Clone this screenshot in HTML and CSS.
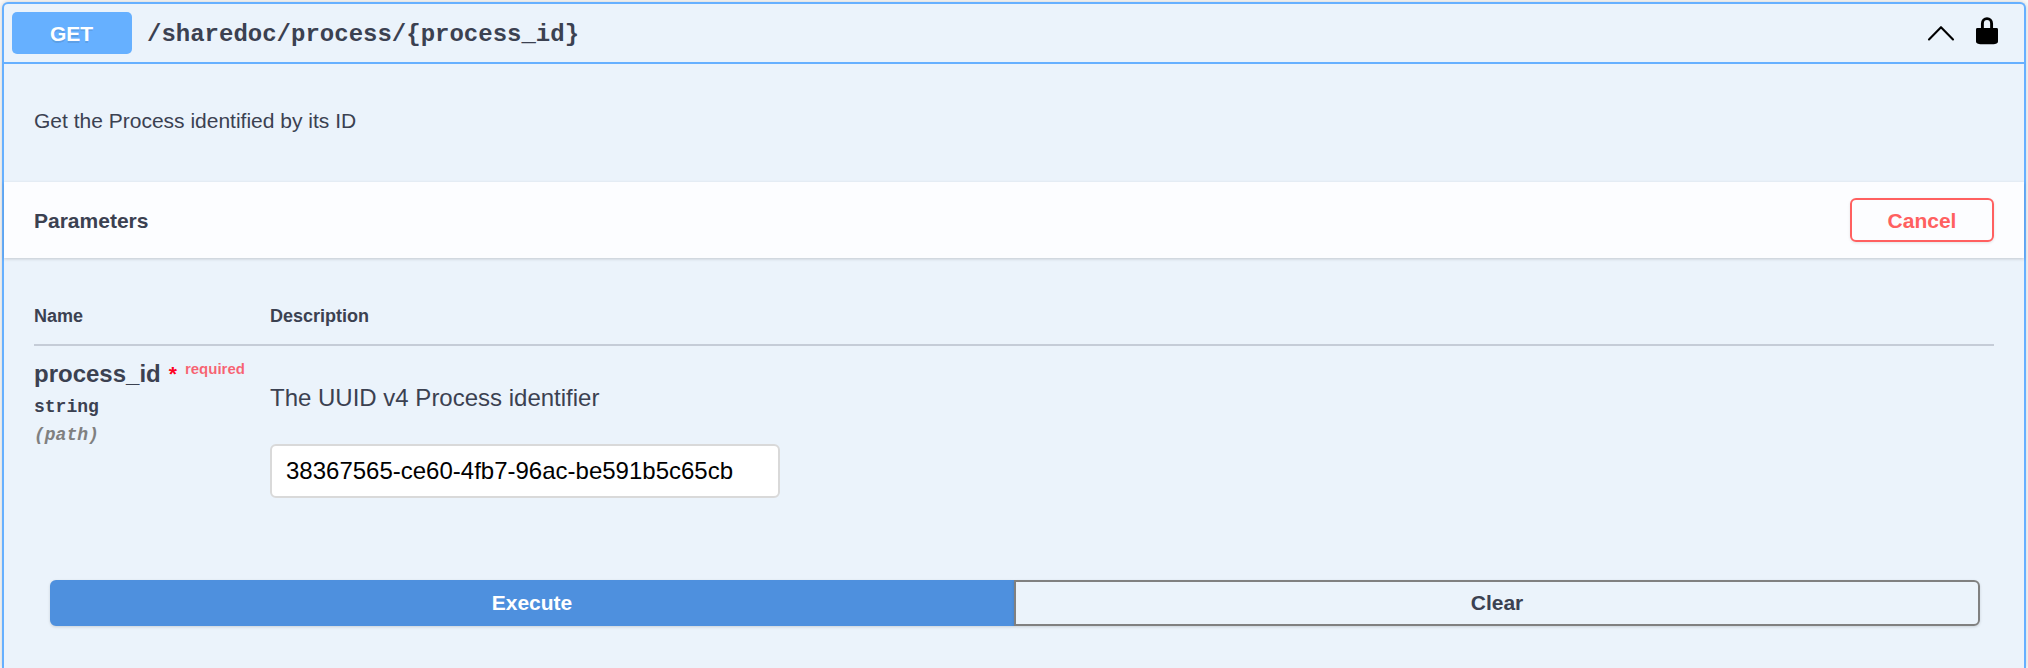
FILE: index.html
```html
<!DOCTYPE html>
<html lang="en">
<head>
<meta charset="utf-8">
<title>API operation</title>
<link rel="stylesheet" href="styles.css">
</head>
<body>
<section class="opblock">
  <header class="summary">
    <span class="method">GET</span>
    <span class="path">/sharedoc/process/{process_id}</span>
    <svg class="chevron" width="28" height="18" viewBox="0 0 28 18"><path d="M2 15.5 14 3.2 26 15.5" fill="none" stroke="#000" stroke-width="2.1" stroke-linecap="round" stroke-linejoin="round"/></svg>
    <svg class="lock" width="22" height="28" viewBox="0 0 22 28"><path d="M6.400 12V6.500C6.400 3.600 8.400 1.600 11 1.600s4.600 2 4.600 4.900V12" fill="none" stroke="#000" stroke-width="2.900"/><path d="M1.400 11h19.200q1.400 0 1.400 1.400v12.200q0 1.300-1.400 1.900-1.600.7-3 .7H4.400q-1.400 0-3-.7Q0 25.900 0 24.600V12.400Q0 11 1.400 11z"/></svg>
  </header>
  <p class="description">Get the Process identified by its ID</p>
  <div class="section-header">
    <h4 class="section-title">Parameters</h4>
    <button class="btn cancel">Cancel</button>
  </div>
  <div class="parameters">
    <div class="row head"><span>Name</span><span>Description</span></div>
    <div class="row">
      <div class="param">
        <div class="param-name">process_id<span class="star">*</span><span class="required">required</span></div>
        <div class="param-type">string</div>
        <div class="param-in">(path)</div>
      </div>
      <div class="param-info">
        <p class="param-text">The UUID v4 Process identifier</p>
        <input class="param-input" type="text" value="38367565-ce60-4fb7-96ac-be591b5c65cb">
      </div>
    </div>
  </div>
  <div class="actions">
    <button class="btn execute">Execute</button>
    <button class="btn clear">Clear</button>
  </div>
</section>
</body>
</html>
```
FILE: styles.css
```css
* { box-sizing: border-box; }
body {
  margin: 0;
  padding: 2px 2px 0;
  height: 668px;
  background: #fafafa;
  color: #3b4151;
  font-family: "Liberation Sans", Arial, sans-serif;
}
p, h4 { margin: 0; }
.opblock {
  height: 666px;
  border: 2px solid #66b0ff;
  border-bottom: 0;
  border-radius: 6px 6px 0 0;
  background: #ebf3fb;
  box-shadow: 0 0 5px rgba(0, 0, 0, .19);
}
.summary {
  display: flex;
  align-items: center;
  height: 60px;
  padding: 0 26px 0 8px;
  border-bottom: 2px solid #66b0ff;
}
.method {
  width: 120px;
  height: 42px;
  padding-right: 1px;
  border-radius: 5px;
  background: #66b0ff;
  color: #fff;
  font-size: 21px;
  font-weight: 700;
  line-height: 44px;
  text-align: center;
  text-shadow: 0 2px 0 rgba(0, 0, 0, .1);
}
.path {
  flex: 1;
  margin-left: 15px;
  padding-top: 4px;
  font: 700 24px/28px "Liberation Mono", "Courier New", monospace;
}
.chevron { margin-right: 21px; }
.lock { margin-bottom: 4px; }
.description {
  height: 118px;
  padding: 45px 30px 0;
  font-size: 21px;
  line-height: 24px;
}
.section-header {
  display: flex;
  align-items: center;
  justify-content: space-between;
  height: 76px;
  padding: 0 30px;
  background: #fcfdff;
  box-shadow: 0 1px 3px rgba(0, 0, 0, .18);
}
.section-title { padding-top: 2px; font-size: 21px; line-height: 24px; }
.btn {
  padding: 0;
  border: 2px solid #808080;
  border-radius: 6px;
  background: transparent;
  box-shadow: 0 1px 3px rgba(0, 0, 0, .14);
  color: #3b4151;
  font: 700 21px/24px "Liberation Sans", Arial, sans-serif;
}
.cancel {
  width: 144px;
  height: 44px;
  padding-top: 1px;
  border-color: #ff6060;
  color: #ff6060;
  box-shadow: 0 1px 3px rgba(0, 0, 0, .1);
}
.parameters { padding: 0 30px; }
.row { display: grid; grid-template-columns: 236px 1fr; }
.head {
  height: 88px;
  padding-top: 47px;
  border-bottom: 2px solid #c5ccd7;
  font-size: 18px;
  font-weight: 700;
  line-height: 22px;
}
.param { padding-top: 14px; font-weight: 700; }
.param-name { font-size: 24px; line-height: 28px; white-space: nowrap; }
.star {
  margin-left: 8px;
  color: #f02;
  font-size: 21px;
  line-height: 0;
  vertical-align: 1px;
}
.required {
  margin-left: 8px;
  color: rgba(255, 0, 20, .6);
  font-size: 15px;
  line-height: 0;
  vertical-align: 8px;
}
.param-type, .param-in { font: 700 18px/28px "Liberation Mono", "Courier New", monospace; }
.param-type { padding-top: 5px; }
.param-in { color: #808080; font-style: italic; }
.param-text { padding: 38px 0 32px; font-size: 24px; line-height: 28px; }
.param-input {
  display: block;
  width: 510px;
  height: 54px;
  padding: 0 14px 1px;
  border: 2px solid #d9d9d9;
  border-radius: 6px;
  background: #fff;
  color: #000;
  font: 24px "Liberation Sans", Arial, sans-serif;
}
.actions { display: flex; padding: 82px 44px 0 46px; }
.actions .btn { height: 46px; }
.actions .execute {
  width: 964px;
  border-color: #4e90de;
  border-radius: 6px 0 0 6px;
  background: #4e90de;
  color: #fff;
}
.actions .clear { flex: 1; border-radius: 0 6px 6px 0; }
```
